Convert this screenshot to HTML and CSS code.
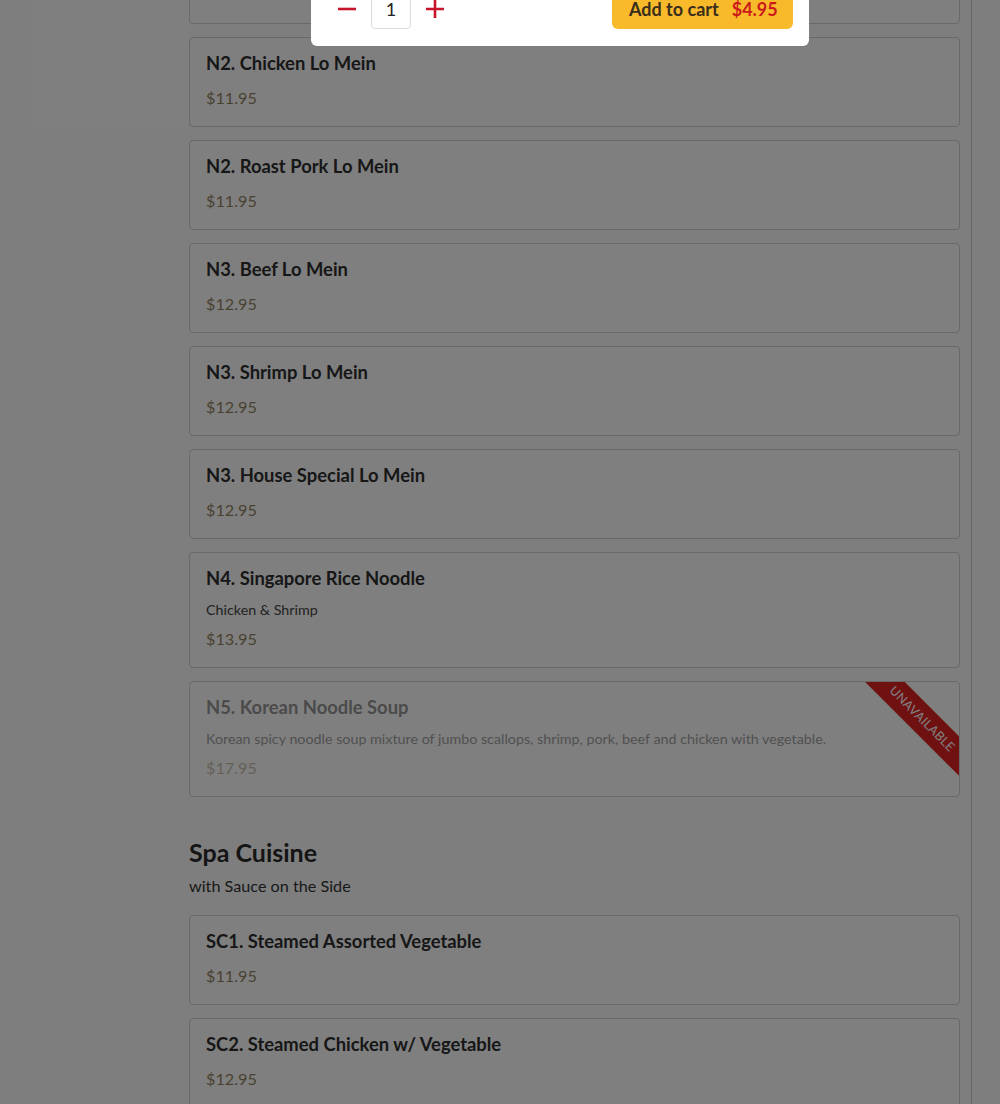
FILE: index.html
```html
<!DOCTYPE html>
<html lang="en">
<head>
    <meta charset="UTF-8">
    <meta name="viewport" content="width=device-width, initial-scale=1.0">
    <title>Menu - Noodles</title>
    <link rel="stylesheet" href="styles.css">
</head>
<body>
    <div class="page">
        <aside class="sidebar"></aside>
        <main class="menu">
            <section class="category first">
                <div class="item">
                    <div class="item-name">N1. Vegetable Lo Mein</div>
                    <div class="item-price">$10.95</div>
                </div>
                <div class="item">
                    <div class="item-name">N2. Chicken Lo Mein</div>
                    <div class="item-price">$11.95</div>
                </div>
                <div class="item">
                    <div class="item-name">N2. Roast Pork Lo Mein</div>
                    <div class="item-price">$11.95</div>
                </div>
                <div class="item">
                    <div class="item-name">N3. Beef Lo Mein</div>
                    <div class="item-price">$12.95</div>
                </div>
                <div class="item">
                    <div class="item-name">N3. Shrimp Lo Mein</div>
                    <div class="item-price">$12.95</div>
                </div>
                <div class="item">
                    <div class="item-name">N3. House Special Lo Mein</div>
                    <div class="item-price">$12.95</div>
                </div>
                <div class="item">
                    <div class="item-name">N4. Singapore Rice Noodle</div>
                    <div class="item-desc">Chicken &amp; Shrimp</div>
                    <div class="item-price">$13.95</div>
                </div>
                <div class="item unavailable">
                    <div class="item-name">N5. Korean Noodle Soup</div>
                    <div class="item-desc">Korean spicy noodle soup mixture of jumbo scallops, shrimp, pork, beef and chicken with vegetable.</div>
                    <div class="item-price">$17.95</div>
                    <div class="ribbon">UNAVAILABLE</div>
                </div>
            </section>

            <section class="category">
                <h2 class="category-title">Spa Cuisine</h2>
                <p class="category-sub">with Sauce on the Side</p>
                <div class="item">
                    <div class="item-name">SC1. Steamed Assorted Vegetable</div>
                    <div class="item-price">$11.95</div>
                </div>
                <div class="item">
                    <div class="item-name">SC2. Steamed Chicken w/ Vegetable</div>
                    <div class="item-price">$12.95</div>
                </div>
            </section>
        </main>
    </div>

    <div class="backdrop"></div>

    <div class="modal">
        <div class="modal-footer">
            <div class="qty">
                <button class="qty-btn" aria-label="Decrease">
                    <svg width="20" height="20" viewBox="0 0 20 20"><path d="M1 10h18" stroke="currentColor" stroke-width="2.6"/></svg>
                </button>
                <div class="qty-value">1</div>
                <button class="qty-btn" aria-label="Increase">
                    <svg width="20" height="20" viewBox="0 0 20 20"><path d="M1 10h18M10 1v18" stroke="currentColor" stroke-width="2.6"/></svg>
                </button>
            </div>
            <button class="add-btn">Add to cart <span class="add-price">$4.95</span></button>
        </div>
    </div>
</body>
</html>
```

FILE: styles.css
```css
body { margin: 0; background: #fdfdfd; font-family: Lato, "Open Sans", sans-serif; color: #2b2b2b; overflow: hidden; }

.page { display: flex; align-items: flex-start; padding-left: 35px; }
.sidebar { width: 154px; height: 128px; background: #fff; flex-shrink: 0; }
.menu { width: 771px; padding-right: 11px; border-right: 1px solid #cfcfcf; min-height: 1200px; margin-top: -66px; }

.category { display: flex; flex-direction: column; gap: 13px; }
.category-title { margin: 39px 0 0; font-size: 25px; line-height: 32px; font-weight: 700; color: #2a2a2a; }
.category-sub { margin: -7px 0 4px; font-size: 16.2px; line-height: 24px; color: #333; }

.item { position: relative; overflow: hidden; background: #fff; border: 1px solid #d2d2d2; border-radius: 4px; padding: 13px 16px 16px; }
.item-name { font-size: 18.4px; line-height: 24px; font-weight: 700; color: #2e2e2e; margin-bottom: 11px; }
.item-desc { font-size: 14.3px; line-height: 18px; color: #444; margin-bottom: 8px; }
.item-price { font-size: 16.2px; line-height: 24px; color: #958463; }
.first .item:first-child .item-price { margin-top: -3px; margin-bottom: 3px; }

.item.unavailable .item-name,
.item.unavailable .item-desc,
.item.unavailable .item-price { opacity: 0.5; }
.ribbon { position: absolute; top: 23px; right: -63px; width: 200px; height: 28px; line-height: 28px; background: #e12323; color: #fff; font-size: 12.5px; letter-spacing: 0.3px; text-align: center; transform: rotate(45deg); }

.backdrop { position: fixed; inset: 0; background: rgba(0, 0, 0, 0.5); z-index: 10; }

.modal { position: fixed; top: -40px; left: 311px; width: 498px; height: 86px; background: #fff; border-radius: 0 0 6px 6px; z-index: 20; display: flex; align-items: flex-end; }
.modal-footer { flex: 1; display: flex; justify-content: space-between; align-items: center; padding: 0 16px 17px; }
.qty { display: flex; align-items: center; gap: 4px; }
.qty-btn { width: 40px; height: 40px; border: 0; background: none; color: #c8142b; padding: 0; display: flex; align-items: center; justify-content: center; }
.qty-value { width: 38px; height: 38px; border: 1px solid #dcdcdc; border-radius: 4px; display: flex; align-items: center; justify-content: center; font-size: 18px; color: #222; }
.add-btn { height: 40px; width: 181px; border: 0; border-radius: 6px; background: #f8ba2b; font-family: inherit; font-size: 18px; font-weight: 700; color: #3a2d1c; white-space: nowrap; padding: 0 17px; display: flex; align-items: center; gap: 13px; }
.add-price { color: #cc1a1a; }
```
